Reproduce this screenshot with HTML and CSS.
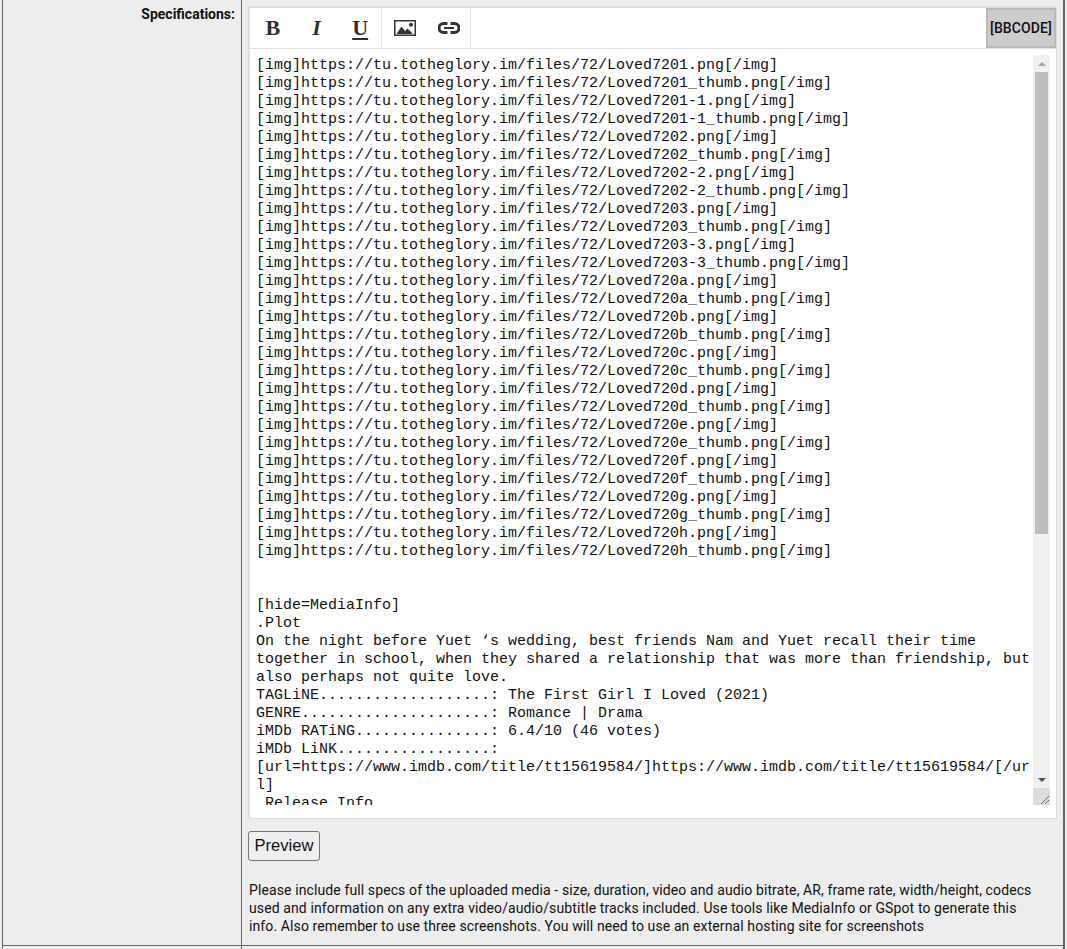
FILE: index.html
```html
<!DOCTYPE html>
<html lang="en">
<head>
<meta charset="utf-8">
<title>Specifications</title>
<link rel="stylesheet" href="styles.css">
</head>
<body>
<div class="row main">
  <div class="label">Specifications:</div>
  <div class="field">
    <div class="editor">
      <div class="toolbar">
        <div class="group format">
          <button class="tool bold" type="button" aria-label="Bold">B</button>
          <button class="tool italic" type="button" aria-label="Italic">I</button>
          <button class="tool bold underline" type="button" aria-label="Underline">U</button>
        </div>
        <div class="group insert">
          <button class="tool" type="button" aria-label="Image"><svg width="22" height="16" viewBox="0 0 22 16"><path d="M.75.75h20.500v14.500H.75z" fill="none" stroke="#333" stroke-width="1.500"/><path d="M2.500 14l5-7.500 3.500 4.500 2.500-2.500 5.500 5.500z" fill="#333"/><circle cx="17" cy="4.800" r="2" fill="#333"/></svg></button>
          <button class="tool" type="button" aria-label="Link"><svg width="22" height="12" viewBox="0 0 22 12"><path d="M9.500 1.500H5.500a4.500 4.500 0 0 0 0 9h4M12.500 1.500h4a4.500 4.500 0 0 1 0 9h-4" fill="none" stroke="#333" stroke-width="3"/><path d="M6 6h10" fill="none" stroke="#333" stroke-width="2"/></svg></button>
        </div>
        <button class="mode" type="button">[BBCODE]</button>
      </div>
      <div class="editor-body">
        <textarea class="source" spellcheck="false">[img]https://tu.totheglory.im/files/72/Loved7201.png[/img]
[img]https://tu.totheglory.im/files/72/Loved7201_thumb.png[/img]
[img]https://tu.totheglory.im/files/72/Loved7201-1.png[/img]
[img]https://tu.totheglory.im/files/72/Loved7201-1_thumb.png[/img]
[img]https://tu.totheglory.im/files/72/Loved7202.png[/img]
[img]https://tu.totheglory.im/files/72/Loved7202_thumb.png[/img]
[img]https://tu.totheglory.im/files/72/Loved7202-2.png[/img]
[img]https://tu.totheglory.im/files/72/Loved7202-2_thumb.png[/img]
[img]https://tu.totheglory.im/files/72/Loved7203.png[/img]
[img]https://tu.totheglory.im/files/72/Loved7203_thumb.png[/img]
[img]https://tu.totheglory.im/files/72/Loved7203-3.png[/img]
[img]https://tu.totheglory.im/files/72/Loved7203-3_thumb.png[/img]
[img]https://tu.totheglory.im/files/72/Loved720a.png[/img]
[img]https://tu.totheglory.im/files/72/Loved720a_thumb.png[/img]
[img]https://tu.totheglory.im/files/72/Loved720b.png[/img]
[img]https://tu.totheglory.im/files/72/Loved720b_thumb.png[/img]
[img]https://tu.totheglory.im/files/72/Loved720c.png[/img]
[img]https://tu.totheglory.im/files/72/Loved720c_thumb.png[/img]
[img]https://tu.totheglory.im/files/72/Loved720d.png[/img]
[img]https://tu.totheglory.im/files/72/Loved720d_thumb.png[/img]
[img]https://tu.totheglory.im/files/72/Loved720e.png[/img]
[img]https://tu.totheglory.im/files/72/Loved720e_thumb.png[/img]
[img]https://tu.totheglory.im/files/72/Loved720f.png[/img]
[img]https://tu.totheglory.im/files/72/Loved720f_thumb.png[/img]
[img]https://tu.totheglory.im/files/72/Loved720g.png[/img]
[img]https://tu.totheglory.im/files/72/Loved720g_thumb.png[/img]
[img]https://tu.totheglory.im/files/72/Loved720h.png[/img]
[img]https://tu.totheglory.im/files/72/Loved720h_thumb.png[/img]


[hide=MediaInfo]
.Plot
On the night before Yuet ‘s wedding, best friends Nam and Yuet recall their time together in school, when they shared a relationship that was more than friendship, but also perhaps not quite love.
TAGLiNE...................: The First Girl I Loved (2021)
GENRE.....................: Romance | Drama
iMDb RATiNG...............: 6.4/10 (46 votes)
iMDb LiNK.................: [url=https://www.imdb.com/title/tt15619584/]https://www.imdb.com/title/tt15619584/[/url]
 Release Info</textarea>
        <div class="scrollbar" aria-hidden="true">
          <div class="arrow"><svg width="8" height="4" viewBox="0 0 8 4"><path d="M4 0l4 4H0z" fill="#a3a3a3"/></svg></div>
          <div class="track"><div class="thumb"></div></div>
          <div class="arrow"><svg width="8" height="4" viewBox="0 0 8 4"><path d="M0 0h8L4 4z" fill="#505050"/></svg></div>
          <div class="resizer"><svg width="17" height="17" viewBox="0 0 17 17"><path d="M8 16l8-8M12 16l4-4" fill="none" stroke="#6e6e6e"/></svg></div>
        </div>
      </div>
    </div>
    <button class="preview" type="button">Preview</button>
    <p class="hint">Please include full specs of the uploaded media - size, duration, video and audio bitrate, AR, frame rate, width/height, codecs used and information on any extra video/audio/subtitle tracks included. Use tools like MediaInfo or GSpot to generate this info. Also remember to use three screenshots. You will need to use an external hosting site for screenshots</p>
  </div>
</div>
<div class="row tail">
  <div class="label"></div>
  <div class="field"></div>
</div>
</body>
</html>
```
FILE: styles.css
```css
html, body { margin: 0; padding: 0; height: 949px; overflow: hidden; background: #ededed; }
body { font-family: Roboto, "Noto Sans", sans-serif; color: #111; }
.row { display: grid; grid-template-columns: 238px 1fr; margin: 0 2px; border-left: 1px solid #666; border-right: 2px solid #666; box-sizing: border-box; }
.main { height: 946px; border-bottom: 1px solid #666; }
.tail { height: 3px; }
.label { text-align: right; font-weight: 700; font-size: 14px; line-height: 16px; padding: 6px 6px 0 0; }
.field { border-left: 1px solid #666; padding: 6px 6px 0 6px; min-width: 0; }
.editor { background: #fff; border-style: solid; border-color: #dedede; border-width: 2px 1px 1px 2px; height: 810px; }
.toolbar { display: flex; height: 40px; border-bottom: 1px solid #e2e2e2; box-sizing: content-box; }
.group { display: flex; box-sizing: border-box; border-right: 1px solid #e4e4e4; }
.format { width: 132px; }
.insert { width: 89px; }
.tool { flex: 1; border: 0; background: none; padding: 0; display: flex; align-items: center; justify-content: center; font-family: "Liberation Serif", serif; font-size: 22px; line-height: 1; color: #2f2f2f; }
.format .tool, .insert .tool { padding-left: 2px; }
.bold { font-weight: 700; }
.italic { font-style: italic; font-weight: 700; }
.underline { text-decoration: underline; text-decoration-thickness: 2px; text-underline-offset: 3px; }
.mode { margin-left: auto; width: 70px; height: 40px; background: #ccc; border: 2px solid #b9b9b9; font-family: inherit; font-size: 14px; font-weight: 500; letter-spacing: .1px; color: #111; padding: 0; }
.editor-body { display: flex; padding: 6px; height: 750px; }
.source { flex: 1; min-width: 0; height: 750px; box-sizing: border-box; border: 0; outline: 0; margin: 0; padding: 2px 0 0; font-family: "Liberation Mono", monospace; font-size: 15px; line-height: 18px; color: #111; background: #fff; overflow: hidden; resize: none; }
.scrollbar { width: 17px; height: 750px; flex: none; display: flex; flex-direction: column; background: #f0f0f0; }
.arrow { height: 17px; flex: none; display: flex; align-items: center; justify-content: center; }
.track { flex: 1; padding: 0 2px; }
.thumb { height: 462px; background: #bdbdbd; }
.resizer { height: 17px; flex: none; background: #dcdcdc; }
.resizer svg { display: block; }
.preview { display: block; margin-top: 12px; width: 72px; height: 30px; background: #efefef; border: 1px solid #767676; border-radius: 3px; font-family: "Liberation Sans", sans-serif; font-size: 16.6px; color: #111; padding: 0; }
.hint { margin: 20px 0 0 1px; max-width: 790px; font-size: 14px; line-height: 18px; letter-spacing: .11px; color: #111; }
```
